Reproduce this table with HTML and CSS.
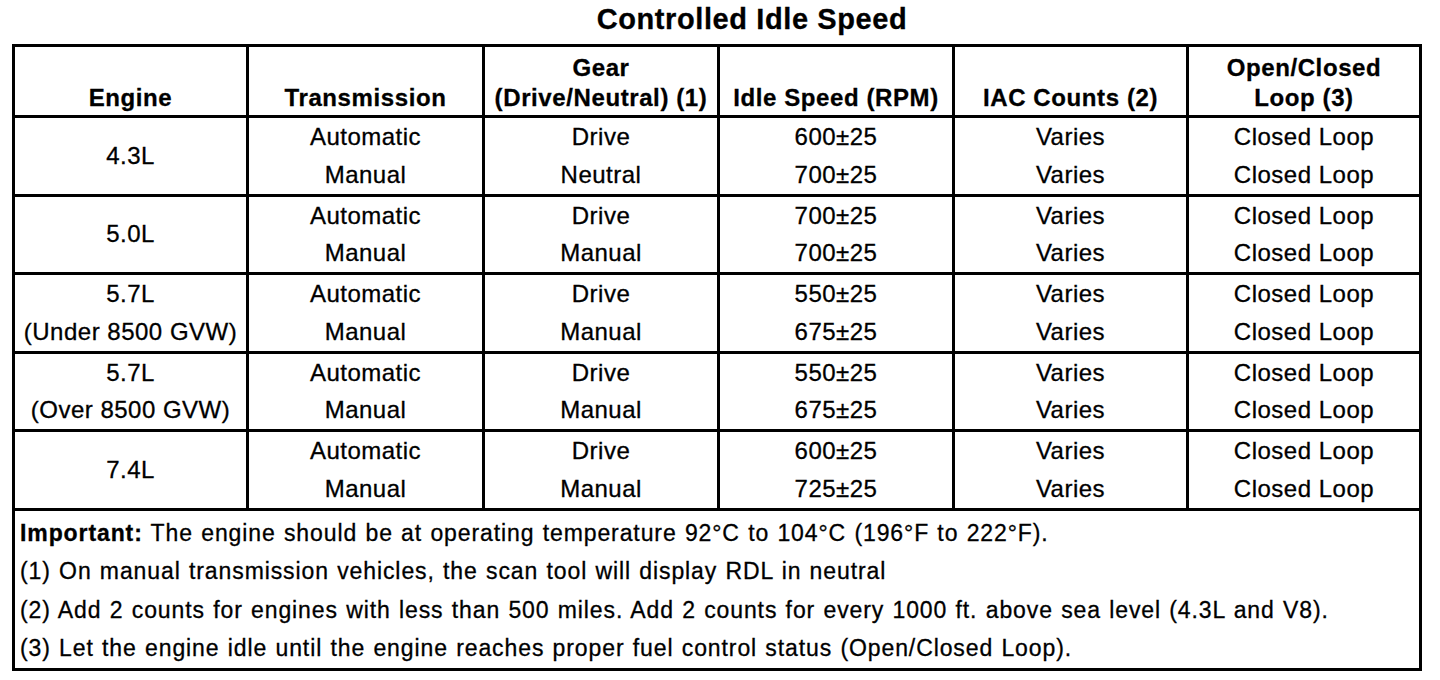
FILE: index.html
```html
<!DOCTYPE html>
<html lang="en">
<head>
<meta charset="utf-8">
<title>Controlled Idle Speed</title>
<link rel="stylesheet" href="styles.css">
</head>
<body>
<div class="page">
  <h1 class="title">Controlled Idle Speed</h1>
  <table class="spec">
    <colgroup>
      <col class="c1"><col class="c2"><col class="c3"><col class="c4"><col class="c5"><col class="c6">
    </colgroup>
    <thead>
      <tr>
        <th>Engine</th>
        <th>Transmission</th>
        <th>Gear<br>(Drive/Neutral) (1)</th>
        <th>Idle Speed (RPM)</th>
        <th>IAC Counts (2)</th>
        <th>Open/Closed<br>Loop (3)</th>
      </tr>
    </thead>
    <tbody>
      <tr>
        <td class="eng">4.3L</td>
        <td><div class="ln">Automatic</div><div class="ln">Manual</div></td>
        <td><div class="ln">Drive</div><div class="ln">Neutral</div></td>
        <td><div class="ln">600±25</div><div class="ln">700±25</div></td>
        <td><div class="ln">Varies</div><div class="ln">Varies</div></td>
        <td><div class="ln">Closed Loop</div><div class="ln">Closed Loop</div></td>
      </tr>
      <tr>
        <td class="eng">5.0L</td>
        <td><div class="ln">Automatic</div><div class="ln">Manual</div></td>
        <td><div class="ln">Drive</div><div class="ln">Manual</div></td>
        <td><div class="ln">700±25</div><div class="ln">700±25</div></td>
        <td><div class="ln">Varies</div><div class="ln">Varies</div></td>
        <td><div class="ln">Closed Loop</div><div class="ln">Closed Loop</div></td>
      </tr>
      <tr>
        <td class="eng"><div class="ln">5.7L</div><div class="ln">(Under 8500 GVW)</div></td>
        <td><div class="ln">Automatic</div><div class="ln">Manual</div></td>
        <td><div class="ln">Drive</div><div class="ln">Manual</div></td>
        <td><div class="ln">550±25</div><div class="ln">675±25</div></td>
        <td><div class="ln">Varies</div><div class="ln">Varies</div></td>
        <td><div class="ln">Closed Loop</div><div class="ln">Closed Loop</div></td>
      </tr>
      <tr>
        <td class="eng"><div class="ln">5.7L</div><div class="ln">(Over 8500 GVW)</div></td>
        <td><div class="ln">Automatic</div><div class="ln">Manual</div></td>
        <td><div class="ln">Drive</div><div class="ln">Manual</div></td>
        <td><div class="ln">550±25</div><div class="ln">675±25</div></td>
        <td><div class="ln">Varies</div><div class="ln">Varies</div></td>
        <td><div class="ln">Closed Loop</div><div class="ln">Closed Loop</div></td>
      </tr>
      <tr>
        <td class="eng">7.4L</td>
        <td><div class="ln">Automatic</div><div class="ln">Manual</div></td>
        <td><div class="ln">Drive</div><div class="ln">Manual</div></td>
        <td><div class="ln">600±25</div><div class="ln">725±25</div></td>
        <td><div class="ln">Varies</div><div class="ln">Varies</div></td>
        <td><div class="ln">Closed Loop</div><div class="ln">Closed Loop</div></td>
      </tr>
      <tr>
        <td class="notes" colspan="6">
          <div class="note"><b>Important:</b> The engine should be at operating temperature 92°C to 104°C (196°F to 222°F).</div>
          <div class="note">(1) On manual transmission vehicles, the scan tool will display RDL in neutral</div>
          <div class="note">(2) Add 2 counts for engines with less than 500 miles. Add 2 counts for every 1000 ft. above sea level (4.3L and V8).</div>
          <div class="note">(3) Let the engine idle until the engine reaches proper fuel control status (Open/Closed Loop).</div>
        </td>
      </tr>
    </tbody>
  </table>
</div>
</body>
</html>
```

FILE: styles.css
```css
html, body {
  margin: 0;
  padding: 0;
  background: #fff;
}

.page {
  width: 1440px;
  height: 680px;
  overflow: hidden;
  font-family: "Liberation Sans", Arial, Helvetica, sans-serif;
  color: #000;
  -webkit-text-stroke: 0.3px #000;
}

.title {
  margin: 0;
  padding: 2px 0 0 64px;
  height: 44px;
  box-sizing: border-box;
  text-align: center;
  font-size: 29px;
  line-height: 34px;
  font-weight: bold;
  letter-spacing: 0.6px;
}

.spec {
  margin-left: 12px;
  width: 1407px;
  border-collapse: collapse;
  table-layout: fixed;
  border: 3px solid #000;
  font-size: 24px;
  letter-spacing: 0.5px;
}

.c1 { width: 234px; }
.c2 { width: 236px; }
.c3 { width: 235px; }
.c4 { width: 235px; }
.c5 { width: 234px; }
.c6 { width: 233px; }

.spec th,
.spec td {
  border: 3px solid #000;
  padding: 0;
  text-align: center;
}

.spec th {
  height: 66px;
  vertical-align: bottom;
  padding-bottom: 2px;
  font-size: 24px;
  line-height: 30px;
  font-weight: bold;
  letter-spacing: 0.6px;
}

.spec td {
  vertical-align: middle;
  line-height: 37.75px;
}

.ln {
  height: 37.75px;
  line-height: 37.75px;
}

.spec td.notes {
  text-align: left;
  padding: 3px 0 0 5px;
  font-size: 23px;
  letter-spacing: 0.9px;
  word-spacing: 1px;
}

.note {
  line-height: 38.5px;
  height: 38.5px;
}
```
